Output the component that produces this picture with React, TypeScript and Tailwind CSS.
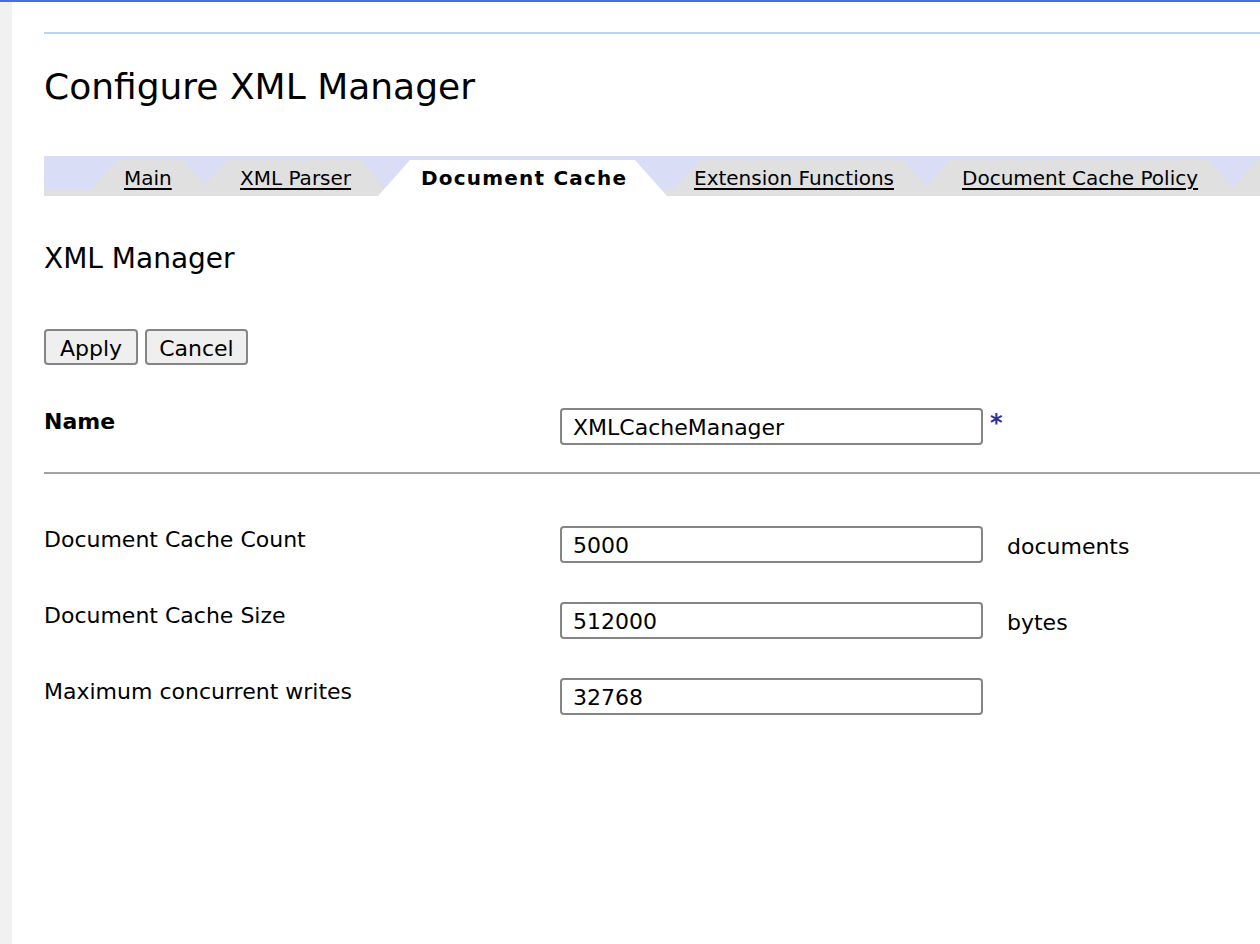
const tabShape = '[clip-path:polygon(32px_0,calc(100%_-_32px)_0,100%_100%,0_100%)]';

const TabLink = ({ label, className }: { label: string; className: string }) => (
    <div className={`${tabShape} ${className} shrink-0 h-[36px] bg-[#e0e0e0] flex items-center`}>
        <a href="#" className="text-[20px] leading-[24px] text-black underline underline-offset-[3px] whitespace-nowrap">
            {label}
        </a>
    </div>
);

const Field = ({ label, value, unit, bold, required }: { label: string; value: string; unit?: string; bold?: boolean; required?: boolean }) => (
    <div className="flex items-start">
        <div className={`w-[516px] pt-[1px] text-[22px] leading-[26px] ${bold ? 'font-bold' : ''}`}>{label}</div>
        <input
            readOnly
            value={value}
            className="w-[423px] h-[37px] border-2 border-[#858585] rounded-[4px] bg-white px-[11px] pt-[2px] text-[22px] text-black outline-none"
        />
        {required && <span className="ml-[7px] mt-[3px] text-[24px] leading-[24px] font-bold text-[#2e3192]">*</span>}
        {unit && <span className="ml-[24px] self-center text-[22px] leading-[26px] mt-[4px]">{unit}</span>}
    </div>
);

export default function App() {
    return (
        <div className="h-[944px] flex border-t-2 border-[#4a6ddb] bg-white text-black font-['DejaVu_Sans',sans-serif] overflow-hidden">
            <div className="w-[12px] shrink-0 bg-[#f1f1f1]" />
            <main className="flex-1 pl-[32px] min-w-0">
                <div className="mt-[30px] h-[2px] bg-[#bad2f5]" />
                <h1 className="mt-[32px] text-[36px] leading-[42px] font-normal">Configure XML Manager</h1>

                {/* tab strip */}
                <div className="mt-[48px] h-[40px] flex items-end overflow-hidden bg-[linear-gradient(to_bottom,#d9ddf6_34px,#e0e0e0_34px)]">
                    <TabLink label="Main" className="ml-[41px] w-[130px] pl-[39px]" />
                    <TabLink label="XML Parser" className="ml-[-20px] w-[197px] pl-[45px]" />
                    <div className={`${tabShape} relative z-10 shrink-0 ml-[-14px] w-[289px] h-[36px] bg-white flex items-center pl-[43px]`}>
                        <span className="text-[20px] leading-[24px] font-bold tracking-[1.2px] whitespace-nowrap">Document Cache</span>
                    </div>
                    <TabLink label="Extension Functions" className="ml-[1px] w-[267px] pl-[26px]" />
                    <TabLink label="Document Cache Policy" className="ml-[-17px] w-[322px] pl-[44px]" />
                    <div className={`${tabShape} shrink-0 ml-[-15px] w-[240px] h-[36px] bg-[#e0e0e0]`} />
                </div>

                <h2 className="mt-[46px] text-[28px] leading-[34px] font-normal">XML Manager</h2>

                <div className="mt-[53px] flex gap-[7px]">
                    <button className="h-[36px] px-[14px] pt-[3px] border-2 border-[#858585] rounded-[4px] bg-[#efefef] text-[22px] leading-[26px]">Apply</button>
                    <button className="h-[36px] px-[12px] pt-[3px] border-2 border-[#858585] rounded-[4px] bg-[#efefef] text-[22px] leading-[26px]">Cancel</button>
                </div>

                <div className="mt-[43px]">
                    <Field label="Name" value="XMLCacheManager" bold required />
                </div>
                <div className="mt-[27px] h-[2px] bg-[#a3a3a3]" />

                <div className="mt-[52px] flex flex-col gap-[39px]">
                    <Field label="Document Cache Count" value="5000" unit="documents" />
                    <Field label="Document Cache Size" value="512000" unit="bytes" />
                    <Field label="Maximum concurrent writes" value="32768" />
                </div>
            </main>
        </div>
    );
}
